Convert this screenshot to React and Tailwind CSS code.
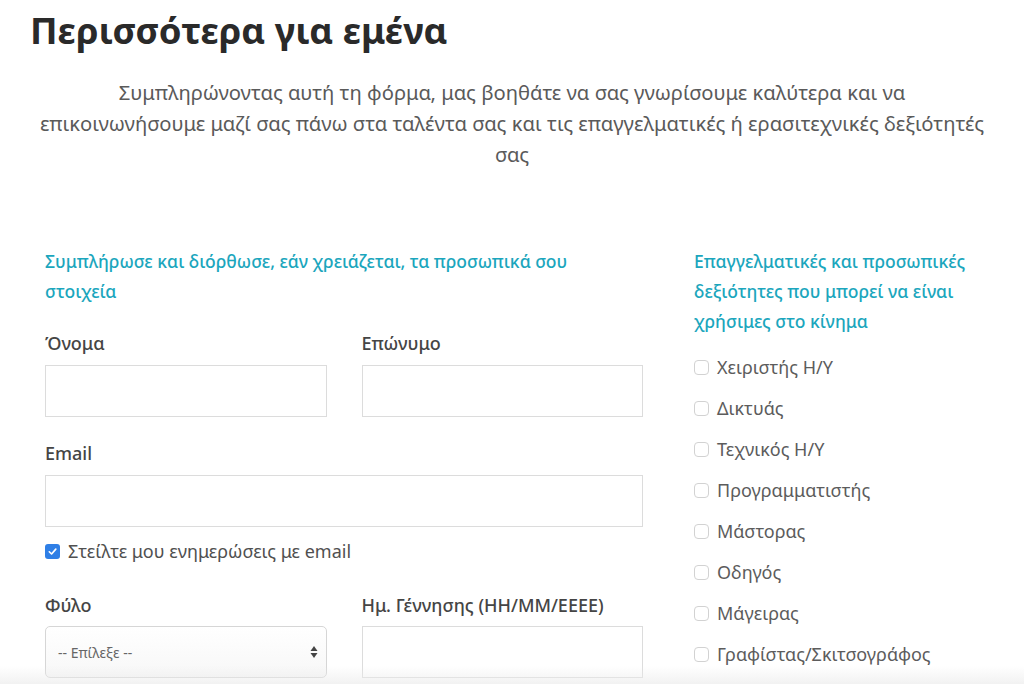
import React from "react";

const skills = [
  "Χειριστής Η/Υ",
  "Δικτυάς",
  "Τεχνικός Η/Υ",
  "Προγραμματιστής",
  "Μάστορας",
  "Οδηγός",
  "Μάγειρας",
  "Γραφίστας/Σκιτσογράφος",
];

function Box({ checked }) {
  if (checked) {
    return (
      <span className="w-[15px] h-[15px] rounded-[3px] bg-[#2f7fe6] flex items-center justify-center shrink-0">
        <svg width="11" height="11" viewBox="0 0 12 12">
          <path d="M2.5 6.3 L5 8.7 L9.6 3.4" fill="none" stroke="white" strokeWidth="1.8" strokeLinecap="round" strokeLinejoin="round" />
        </svg>
      </span>
    );
  }
  return <span className="w-[15px] h-[15px] rounded-[4px] border border-[#d2d2d2] bg-white shrink-0" />;
}

function Field({ label }) {
  return (
    <div>
      <div className="text-[18px] leading-[24px] font-medium text-[#454545]">{label}</div>
      <div className="mt-[10px] h-[52px] border border-[#dcdcdc] bg-white" />
    </div>
  );
}

export default function App() {
  return (
    <div
      className="relative w-[1024px] h-[684px] overflow-hidden bg-white"
      style={{ fontFamily: '"Noto Sans", "Open Sans", sans-serif' }}
    >
      <h1 className="pl-[30px] pt-[7px] text-[36.5px] leading-[46px] font-bold text-[#2a2a2a]">
        Περισσότερα για εμένα
      </h1>

      <p className="mt-[24px] mx-auto w-[980px] text-center text-[20.2px] leading-[31px] text-[#5a5a5a]">
        Συμπληρώνοντας αυτή τη φόρμα, μας βοηθάτε να σας γνωρίσουμε καλύτερα και να
        <br />
        επικοινωνήσουμε μαζί σας πάνω στα ταλέντα σας και τις επαγγελματικές ή ερασιτεχνικές δεξιότητές
        <br />
        σας
      </p>

      <div className="mt-[76px] pl-[45px] flex gap-[51px]">
        <div className="w-[598px] shrink-0">
          <h2 className="text-[17.5px] leading-[30px] font-medium text-[#1ba6bd]">
            Συμπλήρωσε και διόρθωσε, εάν χρειάζεται, τα προσωπικά σου
            <br />
            στοιχεία
          </h2>

          <div className="mt-[25px] grid grid-cols-2 gap-[35px]">
            <Field label="Όνομα" />
            <Field label="Επώνυμο" />
          </div>

          <div className="mt-[24px]">
            <div className="text-[18px] leading-[24px] font-medium text-[#454545]">Email</div>
            <div className="mt-[10px] h-[52px] border border-[#dcdcdc] bg-white" />
          </div>

          <label className="mt-[12px] flex items-center gap-[8px] h-[24px] text-[18px] text-[#505050]">
            <Box checked />
            Στείλτε μου ενημερώσεις με email
          </label>

          <div className="mt-[30px] grid grid-cols-2 gap-[35px]">
            <div>
              <div className="text-[18px] leading-[24px] font-medium text-[#454545]">Φύλο</div>
              <div className="mt-[9px] h-[52px] rounded-[5px] border border-[#d6d6d6] bg-gradient-to-b from-white to-[#f7f7f7] flex items-center justify-between pl-[12px] pr-[8px]">
                <span className="text-[14px] text-[#666]">-- Επίλεξε --</span>
                <svg width="8" height="14" viewBox="0 0 8 14">
                  <path d="M4 1 L7.5 6 H0.5 Z" fill="#444" />
                  <path d="M4 13 L7.5 8 H0.5 Z" fill="#444" />
                </svg>
              </div>
            </div>
            <div>
              <div className="text-[18px] leading-[24px] font-medium text-[#454545]">Ημ. Γέννησης (ΗΗ/ΜΜ/ΕΕΕΕ)</div>
              <div className="mt-[9px] h-[52px] border border-[#dcdcdc] bg-white" />
            </div>
          </div>
        </div>

        <div className="w-[310px] shrink-0">
          <h2 className="text-[17.5px] leading-[30px] font-medium text-[#1ba6bd]">
            Επαγγελματικές και προσωπικές
            <br />
            δεξιότητες που μπορεί να είναι
            <br />
            χρήσιμες στο κίνημα
          </h2>
          <ul className="mt-[11px]">
            {skills.map((s) => (
              <li key={s} className="h-[41px] flex items-center gap-[8px] text-[18px] text-[#5c5c5c]">
                <Box />
                {s}
              </li>
            ))}
          </ul>
        </div>
      </div>

      <div className="absolute left-0 right-0 bottom-0 h-[18px] bg-gradient-to-b from-transparent to-[#ececec]/70 pointer-events-none" />
    </div>
  );
}
